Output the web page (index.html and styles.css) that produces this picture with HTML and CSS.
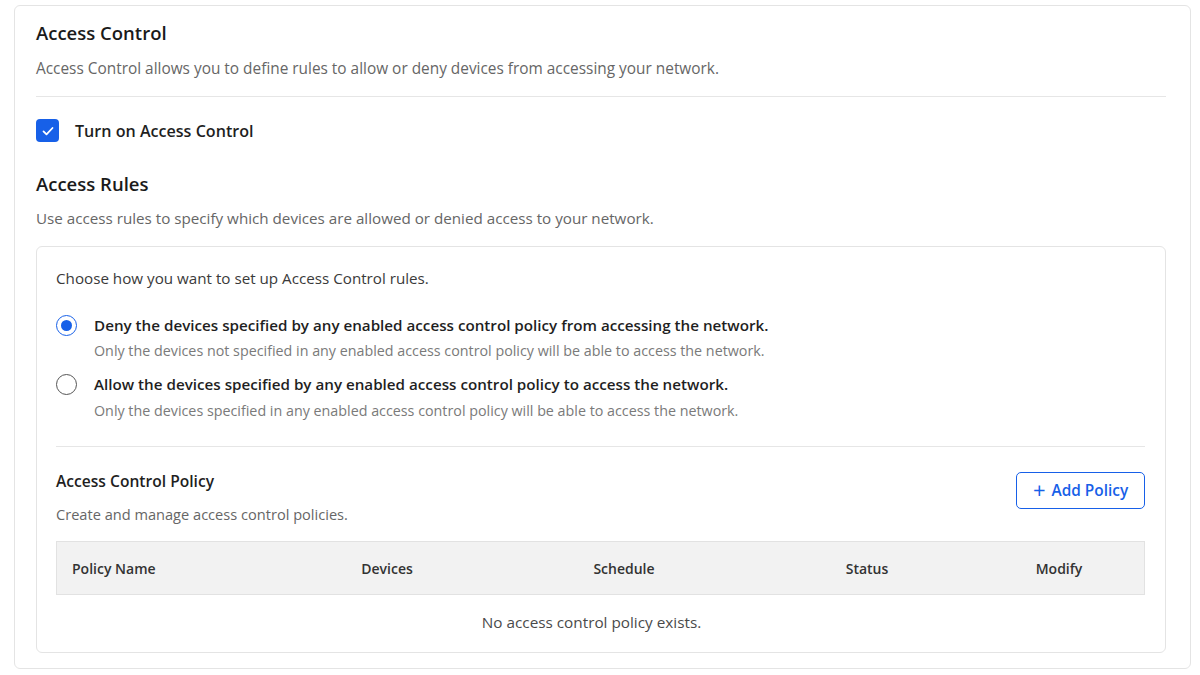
FILE: index.html
```html
<!DOCTYPE html>
<html lang="en">
  <head>
    <meta charset="UTF-8" />
    <meta name="viewport" content="width=device-width, initial-scale=1.0" />
    <title>Access Control</title>
    <link rel="stylesheet" href="styles.css">
  </head>
  <body>
    <section class="card">
      <h2 class="title">Access Control</h2>
      <p class="desc">Access Control allows you to define rules to allow or deny devices from accessing your network.</p>
      <hr class="line" />

      <label class="check">
        <span class="check-box">
          <svg viewBox="0 0 24 24" width="18" height="18"><path d="M6 12.5l4 4 8-8.5" fill="none" stroke="#fff" stroke-width="2.4" stroke-linecap="round" stroke-linejoin="round"/></svg>
        </span>
        <span class="check-label">Turn on Access Control</span>
      </label>

      <h2 class="title rules-title">Access Rules</h2>
      <p class="desc rules-desc">Use access rules to specify which devices are allowed or denied access to your network.</p>

      <div class="panel">
        <p class="panel-intro">Choose how you want to set up Access Control rules.</p>

        <div class="radio">
          <span class="radio-dot on"></span>
          <div>
            <div class="radio-label">Deny the devices specified by any enabled access control policy from accessing the network.</div>
            <div class="radio-sub">Only the devices not specified in any enabled access control policy will be able to access the network.</div>
          </div>
        </div>
        <div class="radio">
          <span class="radio-dot"></span>
          <div>
            <div class="radio-label">Allow the devices specified by any enabled access control policy to access the network.</div>
            <div class="radio-sub">Only the devices specified in any enabled access control policy will be able to access the network.</div>
          </div>
        </div>

        <hr class="line panel-line" />

        <div class="policy-head">
          <div>
            <h3 class="policy-title">Access Control Policy</h3>
            <p class="policy-sub">Create and manage access control policies.</p>
          </div>
          <a href="javascript:;" class="btn"><span class="plus">+</span> Add Policy</a>
        </div>

        <div class="table">
          <div class="row head">
            <span class="cell first">Policy Name</span>
            <span class="cell">Devices</span>
            <span class="cell">Schedule</span>
            <span class="cell">Status</span>
            <span class="cell">Modify</span>
          </div>
          <div class="empty">No access control policy exists.</div>
        </div>
      </div>
    </section>
  </body>
</html>
```

FILE: styles.css
```css
* {
  margin: 0;
  padding: 0;
  box-sizing: border-box;
  text-decoration: none;
}
body {
  padding: 5px 9px 0 14px;
  background: #fff;
  font-family: "Open Sans", "Noto Sans", sans-serif;
  color: #1f1f1f;
}
.card {
  border: 1px solid #e4e4e4;
  border-radius: 6px;
  padding: 19px 24px 17px 21px;
  height: 664px;
}
.title {
  font-size: 18.5px;
  font-weight: 600;
  line-height: 16px;
  color: #1a1a1a;
}
.desc {
  font-size: 15.4px;
  color: #666;
  margin-top: 19px;
  line-height: 18px;
}
.rules-desc {
  font-size: 15.2px;
  margin-top: 17px;
}
.line {
  border: none;
  border-top: 1px solid #e6e6e6;
  margin-top: 18px;
}
.check {
  display: flex;
  align-items: center;
  gap: 16px;
  margin-top: 22px;
}
.check-box {
  width: 23px;
  height: 23px;
  border-radius: 4px;
  background: #1760e8;
  display: flex;
  align-items: center;
  justify-content: center;
}
.check-label {
  font-size: 16.1px;
  font-weight: 600;
}
.rules-title {
  margin-top: 34px;
}
.panel {
  margin-top: 19px;
  border: 1px solid #e4e4e4;
  border-radius: 6px;
  padding: 22px 20px 20px 19px;
}
.panel-intro {
  font-size: 15.2px;
  color: #3a3a3a;
  line-height: 18px;
}
.radio {
  display: flex;
  gap: 17px;
  margin-top: 29px;
}
.radio + .radio {
  margin-top: 15px;
}
.radio-dot {
  width: 21px;
  height: 21px;
  border-radius: 50%;
  border: 1.5px solid #555;
  flex-shrink: 0;
  margin-top: -1px;
  position: relative;
}
.radio-dot.on {
  border-color: #1760e8;
}
.radio-dot.on::after {
  content: "";
  position: absolute;
  left: 3.5px;
  top: 3.5px;
  width: 11px;
  height: 11px;
  border-radius: 50%;
  background: #1760e8;
}
.radio-label {
  font-size: 15.2px;
  font-weight: 600;
  line-height: 18px;
}
.radio-sub {
  font-size: 14.3px;
  color: #7a7a7a;
  line-height: 18px;
  margin-top: 8px;
}
.radio + .radio .radio-sub {
  margin-top: 9px;
}
.panel-line {
  margin-top: 26px;
}
.policy-head {
  display: flex;
  justify-content: space-between;
  align-items: flex-start;
  margin-top: 25px;
}
.policy-title {
  font-size: 15.6px;
  font-weight: 600;
  line-height: 18px;
}
.policy-sub {
  font-size: 14.6px;
  color: #666;
  line-height: 18px;
  margin-top: 15px;
}
.btn {
  display: flex;
  align-items: center;
  gap: 6px;
  height: 37px;
  width: 129px;
  justify-content: center;
  border: 1px solid #1760e8;
  border-radius: 5px;
  color: #1760e8;
  font-size: 15.4px;
  font-weight: 600;
}
.plus {
  font-size: 22px;
  font-weight: 400;
  line-height: 1;
  margin-top: -3px;
}
.table {
  margin-top: 18px;
}
.row.head {
  display: grid;
  grid-template-columns: 229px 202px 272px 214px 1fr;
  align-items: center;
  height: 54px;
  background: #f2f2f2;
  border: 1px solid #e2e2e2;
}
.cell {
  font-size: 14px;
  font-weight: 600;
  color: #333;
  text-align: center;
}
.cell.first {
  text-align: left;
  padding-left: 15px;
}
.empty {
  text-align: center;
  font-size: 15.3px;
  color: #4a4a4a;
  padding-top: 17px;
  padding-right: 18px;
}
```
